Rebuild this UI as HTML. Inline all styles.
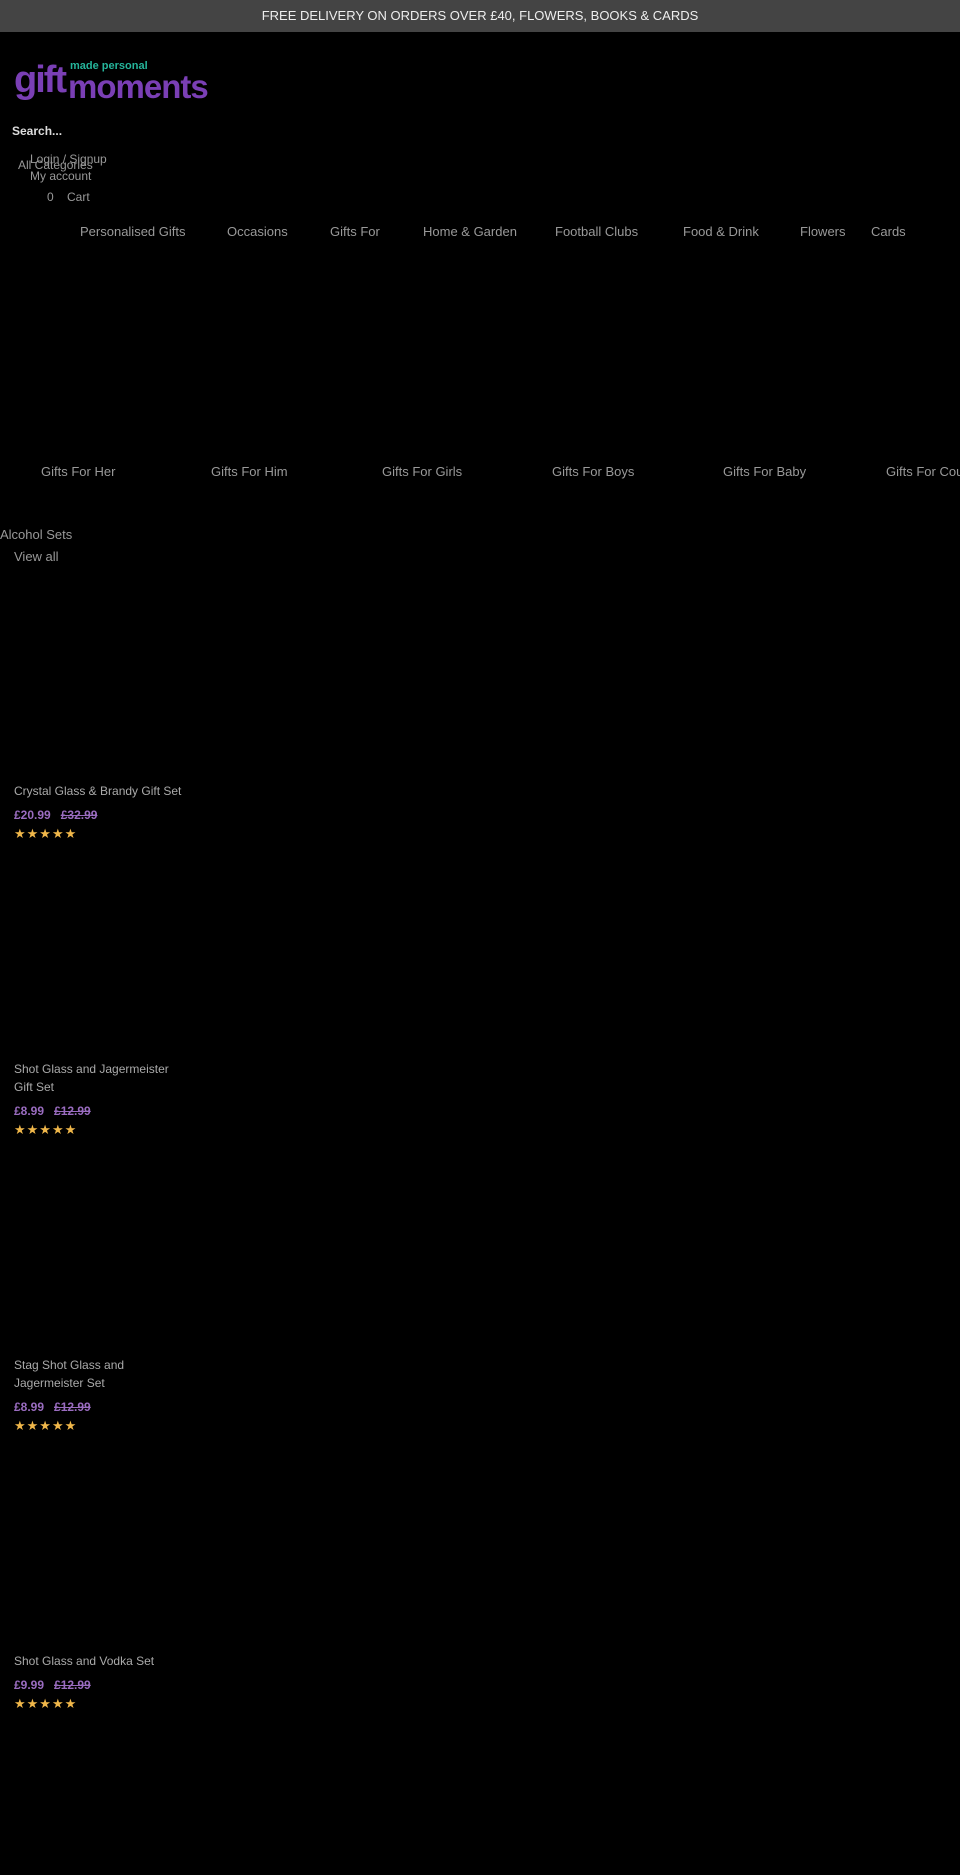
<!DOCTYPE html>
<html><head><meta charset="utf-8"><style>
*{margin:0;padding:0;box-sizing:border-box}
body{width:960px;height:1875px;background:#000;font-family:"Liberation Sans",sans-serif;color:#aaa;position:relative;overflow:hidden}
.a{position:absolute;white-space:nowrap}
.bar{top:0;left:0;width:960px;height:32px;background:#444;color:#eee;font-size:13px;text-align:center;line-height:32px}
.nav{top:224px;font-size:13px;color:#999}
.cat{top:464px;font-size:13px;color:#999}
.t{font-size:12px;color:#aaa;line-height:18px}
.p{font-size:12px;font-weight:bold;color:#9a6cc0}
.s{font-size:13px;color:#f0b74a;letter-spacing:1px}
</style></head><body>
<div class="a bar">FREE DELIVERY ON ORDERS OVER £40, FLOWERS, BOOKS &amp; CARDS</div>
<div class="a" style="top:58px;left:14px;height:48px">
<span style="position:absolute;left:0;top:4px;font-size:38px;font-weight:bold;color:#7a3fb5;letter-spacing:-2px;line-height:36px">gift</span>
<span style="position:absolute;left:54px;top:12px;font-size:33px;font-weight:bold;color:#7a3fb5;letter-spacing:-1px;line-height:34px">moments</span>
<span style="position:absolute;left:56px;top:2px;font-size:11px;font-weight:bold;color:#25b59b;line-height:12px">made personal</span>
</div>
<div class="a" style="top:124px;left:12px;font-size:12px;font-weight:bold;color:#ddd">Search...</div>
<div class="a" style="top:152px;left:30px;font-size:12px;color:#999">Login / Signup</div>
<div class="a" style="top:158px;left:18px;font-size:12px;color:#999">All Categories</div>
<div class="a" style="top:169px;left:30px;font-size:12px;color:#999">My account</div>
<div class="a" style="top:190px;left:47px;font-size:12px;color:#999">0</div>
<div class="a" style="top:190px;left:67px;font-size:12px;color:#999">Cart</div>
<div class="a nav" style="left:80px">Personalised Gifts</div>
<div class="a nav" style="left:227px">Occasions</div>
<div class="a nav" style="left:330px">Gifts For</div>
<div class="a nav" style="left:423px">Home &amp; Garden</div>
<div class="a nav" style="left:555px">Football Clubs</div>
<div class="a nav" style="left:683px">Food &amp; Drink</div>
<div class="a nav" style="left:800px">Flowers</div>
<div class="a nav" style="left:871px">Cards</div>
<div class="a cat" style="left:41px">Gifts For Her</div>
<div class="a cat" style="left:211px">Gifts For Him</div>
<div class="a cat" style="left:382px">Gifts For Girls</div>
<div class="a cat" style="left:552px">Gifts For Boys</div>
<div class="a cat" style="left:723px">Gifts For Baby</div>
<div class="a cat" style="left:886px">Gifts For Couples</div>
<div class="a" style="top:527px;left:0;font-size:13px;color:#999">Alcohol Sets</div>
<div class="a" style="top:549px;left:14px;font-size:13px;color:#999">View all</div>

<div class="a t" style="top:782px;left:14px">Crystal Glass &amp; Brandy Gift Set</div>
<div class="a p" style="top:808px;left:14px">£20.99 &nbsp;&nbsp;<span style="text-decoration:line-through">£32.99</span></div>
<div class="a s" style="top:826px;left:14px">★★★★★</div>

<div class="a t" style="top:1060px;left:14px">Shot Glass and Jagermeister<br>Gift Set</div>
<div class="a p" style="top:1104px;left:14px">£8.99 &nbsp;&nbsp;<span style="text-decoration:line-through">£12.99</span></div>
<div class="a s" style="top:1122px;left:14px">★★★★★</div>

<div class="a t" style="top:1356px;left:14px">Stag Shot Glass and<br>Jagermeister Set</div>
<div class="a p" style="top:1400px;left:14px">£8.99 &nbsp;&nbsp;<span style="text-decoration:line-through">£12.99</span></div>
<div class="a s" style="top:1418px;left:14px">★★★★★</div>

<div class="a t" style="top:1652px;left:14px">Shot Glass and Vodka Set</div>
<div class="a p" style="top:1678px;left:14px">£9.99 &nbsp;&nbsp;<span style="text-decoration:line-through">£12.99</span></div>
<div class="a s" style="top:1696px;left:14px">★★★★★</div>
</body></html>
